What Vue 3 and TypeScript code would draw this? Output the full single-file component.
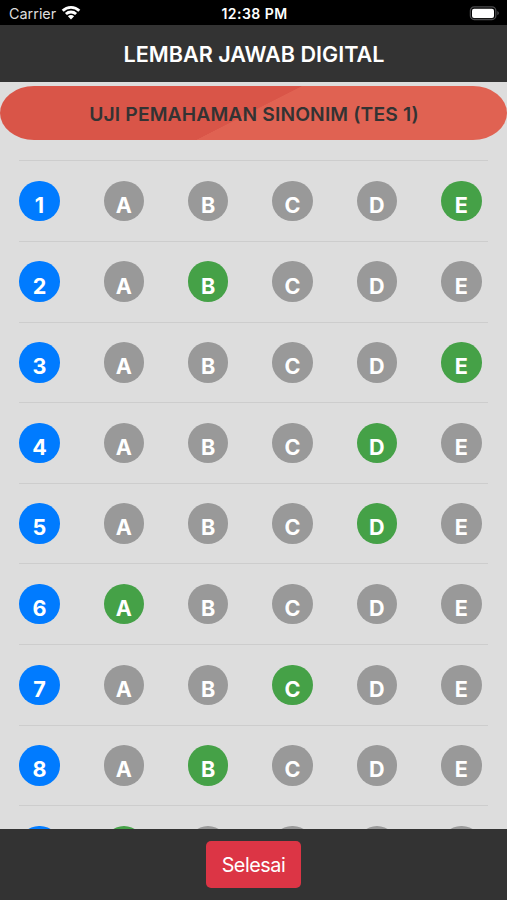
<script setup lang="ts">
import { ref } from 'vue'

interface Question {
  no: number
  answer: string
}

const options: string[] = ['A', 'B', 'C', 'D', 'E']
const questions = ref<Question[]>(
  ['E', 'B', 'E', 'D', 'D', 'A', 'C', 'B', 'A'].map((answer, i) => ({ no: i + 1, answer })),
)

function choose(question: Question, option: string): void {
  question.answer = option
}
</script>

<template>
  <div class="screen">
    <div class="status">
      <div class="carrier">
        <span>Carrier</span>
        <svg class="wifi" width="20" height="15" viewBox="0 0 20 15">
          <g fill="none" stroke="#fff" stroke-width="2.8">
            <path d="M1.7 5.7C6.2 1.2 13.8 1.2 18.3 5.7" />
            <path d="M4.9 9.1C7.8 6.3 12.2 6.3 15.1 9.1" />
          </g>
          <path d="M6.9 11.3C8.7 9.7 11.3 9.7 13.1 11.3L10 14.4Z" fill="#fff" />
        </svg>
      </div>
      <span class="time">12:38 PM</span>
      <div class="power">
        <svg width="32" height="16" viewBox="0 0 32 16">
          <rect x="2.4" y="1.9" width="25.4" height="12.6" rx="3.8" fill="none" stroke="#4c4c4e" stroke-width="1.3" />
          <rect x="4" y="3.7" width="22" height="9.2" rx="2" fill="#fff" />
          <path d="M29.3 6.1C31.4 6.9 31.4 9.5 29.3 10.3Z" fill="#4c4c4e" />
        </svg>
      </div>
    </div>

    <header class="header"><h1>LEMBAR JAWAB DIGITAL</h1></header>

    <main class="content">
      <div class="banner"><h2>UJI PEMAHAMAN SINONIM (TES 1)</h2></div>
      <div class="list">
        <div v-for="q in questions" :key="q.no" class="row">
          <span class="dot number">{{ q.no }}</span>
          <button
            v-for="o in options"
            :key="o"
            type="button"
            class="dot"
            :class="{ chosen: q.answer === o }"
            @click="choose(q, o)"
          >{{ o }}</button>
        </div>
      </div>
    </main>

    <footer class="footer"><button type="button" class="done">Selesai</button></footer>
  </div>
</template>

<style>
body {
  margin: 0;
  overflow: hidden;
}
</style>

<style scoped>
.screen {
  display: flex;
  flex-direction: column;
  width: 507px;
  height: 900px;
  overflow: hidden;
  background: #ddd;
  font-family: Inter, "Liberation Sans", sans-serif;
}
.status {
  flex: none;
  display: grid;
  grid-template-columns: 1fr auto 1fr;
  align-items: center;
  box-sizing: border-box;
  height: 25.4px;
  padding: 2px 7px 0 9px;
  background: #000;
  color: #fff;
  font-size: 14.4px;
}
.carrier {
  display: flex;
  align-items: center;
  gap: 5px;
  color: #ddd;
}
.wifi {
  margin-top: -2px;
}
.time {
  font-size: 14px;
  font-weight: 600;
  letter-spacing: 0.45px;
}
.power {
  display: flex;
  justify-content: flex-end;
  margin-top: -1px;
}
.header {
  flex: none;
  display: flex;
  align-items: center;
  justify-content: center;
  box-sizing: border-box;
  height: 57.1px;
  background: #333;
  color: #fff;
}
h1,
h2 {
  margin: 0;
  font-weight: 600;
  white-space: nowrap;
}
h1 {
  padding-left: 1px;
  font-size: 21.6px;
}
h2 {
  padding: 1px 0 0 1px;
  font-size: 19.3px;
  letter-spacing: 0.13px;
}
.content {
  flex: 1;
  min-height: 0;
  box-sizing: border-box;
  padding-top: 4px;
  overflow: hidden;
}
.banner {
  display: flex;
  align-items: center;
  justify-content: center;
  height: 53.5px;
  border-radius: 34px / 27px;
  background: linear-gradient(153deg, #d95548 49.2%, #e06252 49.4%);
  color: #333;
}
.list {
  margin: 20.3px 19px 0 20px;
}
.row {
  display: flex;
  justify-content: space-between;
  box-sizing: border-box;
  height: 80.63px;
  padding: 19.5px 6.5px 0 0;
  margin-left: -0.8px;
  border-top: 1px solid #cdcdcd;
}
.dot {
  display: flex;
  align-items: center;
  justify-content: center;
  box-sizing: border-box;
  width: 40.5px;
  height: 40.5px;
  padding: 9.5px 0 0;
  border: 0;
  border-radius: 50%;
  background: #999;
  color: #fff;
  font: 650 21.6px/1 Inter, "Liberation Sans", sans-serif;
}
.number {
  background: #007bff;
}
.chosen {
  background: #45a147;
}
.footer {
  flex: none;
  display: flex;
  align-items: flex-start;
  justify-content: center;
  box-sizing: border-box;
  height: 71px;
  padding-top: 12px;
  background: #333;
}
.done {
  width: 95px;
  height: 47px;
  padding: 2px 0 0;
  border: 0;
  border-radius: 5px;
  background: #dc3545;
  color: #fff;
  font: 400 19.8px/1 Inter, "Liberation Sans", sans-serif;
  letter-spacing: -0.45px;
}
</style>
